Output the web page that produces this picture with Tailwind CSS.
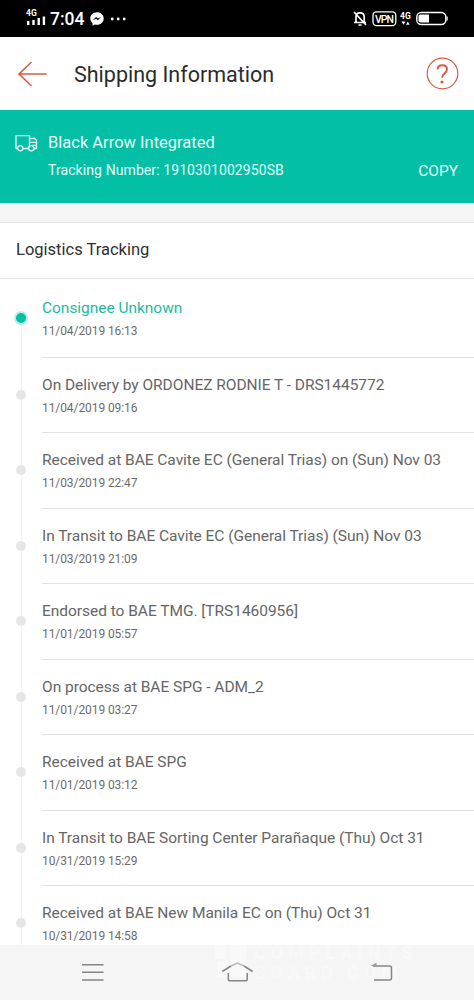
<!DOCTYPE html>
<html lang="en">
<head>
<meta charset="utf-8">
<title>Shipping Information</title>
<script src="https://cdn.jsdelivr.net/npm/@tailwindcss/browser@4"></script>
</head>
<body class="w-[474px] h-[1000px] overflow-hidden bg-white font-['Roboto',sans-serif] flex flex-col">
<div class="h-[37px] shrink-0 bg-black text-white flex items-center">
  <svg class="ml-6 w-[24px] h-[37px]" viewBox="0 0 24 37" fill="#fff"><text x="2" y="16" font-size="8.5" font-weight="700" font-family="Roboto">4G</text><path d="M3 21h2.400v4H3zM8.300 20h2.400v5H8.300zM13.500 18h2.400v7h-2.400zM18.700 16.500h2.400v8.500h-2.400z"/></svg>
  <span class="ml-[2px] mt-[2px] w-[37px] text-[17.500px] font-medium whitespace-nowrap">7:04</span>
  <svg class="ml-[3px] w-[14px] h-[14px]" viewBox="0 0 14 14"><path fill="#fff" d="M7 .3C3 .3.300 3.100.300 6.500c0 2 .9 3.700 2.300 4.800v2.400l2.200-1.200c.7.200 1.400.300 2.200.300 3.900 0 6.700-2.800 6.700-6.300S10.900.300 7 .300z"/><path d="M2.800 8.300 6 5l1.800 1.600L11 5 7.900 8.300 6.100 6.700z" fill="#000"/></svg>
  <svg class="ml-[6px] w-[18px] h-[4px]" viewBox="0 0 18 4" fill="#fff"><circle cx="2.200" cy="2" r="1.400"/><circle cx="8.200" cy="2" r="1.400"/><circle cx="14.200" cy="2" r="1.400"/></svg>
  <svg class="ml-auto w-[122px] h-[37px]" viewBox="352 0 122 37" fill="none" stroke="#fff"><path d="M354 22.500h12M356 22v-5c0-2.500 1.600-4.200 4-4.200s4.200 1.700 4.200 4.200v5M358.500 25h3M354 12l12 13" stroke-width="1.700"/><rect x="373" y="11.800" width="22.800" height="13.800" rx="3.500" stroke-width="1.300"/><text x="374.900" y="22.500" font-size="10.500" font-weight="500" font-family="Roboto" fill="#fff" stroke="none" textLength="19">VPN</text><text x="400" y="18.500" font-size="8.500" font-weight="700" font-family="Roboto" fill="#fff" stroke="none">4G</text><path d="M401.500 21.500h4l-2 3.200zM406 24.700h3.600l-1.800-3.200z" fill="#fff" stroke="none"/><rect x="416.800" y="12.500" width="29" height="12" rx="4.500" stroke-width="1.400"/><path d="M420.500 14.500h8.500v8h-8.500a2 2 0 0 1-2-2v-4a2 2 0 0 1 2-2zM446.500 16.500h1.200v4h-1.200z" fill="#fff" stroke="none"/></svg>
</div>
<header class="h-[73px] shrink-0 flex items-center">
  <svg class="ml-[17px] w-[31px] h-[28px]" viewBox="0 0 31 28" fill="none" stroke="#d95b43" stroke-width="1.600" stroke-linecap="round"><path d="M2 14h27M14 2.500 2 14l12 11.500"/></svg>
  <h1 class="ml-[26px] mt-[3px] text-[21.500px] text-[#2b2b2b] whitespace-nowrap">Shipping Information</h1>
  <svg class="ml-auto mr-[15px] w-[33px] h-[33px]" viewBox="0 0 33 33" fill="none" stroke="#d95b43"><circle cx="16.500" cy="16.500" r="15.300" stroke-width="1.200"/><path d="M11.600 12.500c0-2.600 2-4.200 4.700-4.200 2.800 0 4.700 1.600 4.700 4 0 3.700-4.900 4.200-4.900 8.500" stroke-width="1.900"/><circle cx="16" cy="25" r="1.600" fill="#d95b43" stroke="none"/></svg>
</header>
<section class="h-[93px] shrink-0 bg-[#02bfa5] text-[#e2fffa] flex items-start">
  <svg class="ml-[15px] mt-[24px] w-[23px] h-[18px]" viewBox="0 0 23 18" fill="none" stroke="#e2fffa" stroke-width="1.300" stroke-linejoin="round"><path d="M3 14.500H1V1.700h13.500v12.800M7.500 14.500h6.200M14.500 4.500h5l2 1.800v8.200h-2.500M15 8.300h6.500M17 11.300h4.500"/><circle cx="5.300" cy="14.200" r="2.600"/><circle cx="16.300" cy="14.200" r="2.600" fill="#02bfa5"/></svg>
  <div class="ml-[10px] mt-[22px] whitespace-nowrap">
    <div class="text-[16.500px] leading-[22px]">Black Arrow Integrated</div>
    <div class="mt-[5px] text-[14px] leading-[22px] tracking-[0.090px]">Tracking Number: 1910301002950SB</div>
  </div>
  <div class="ml-auto mr-[16px] mt-[50px] text-[15.500px] leading-[22px]">COPY</div>
</section>
<div class="h-[20px] shrink-0 bg-[#f5f5f5] border-b border-[#e6e6e6]"></div>
<h2 class="h-[56px] shrink-0 border-b border-[#e4e4e4] pl-4 pt-[16px] text-[16.500px] leading-[22px] text-[#2f2f2f]">Logistics Tracking</h2>
<main id="events" class="h-[666px] shrink-0 overflow-hidden"></main>
<nav class="relative h-[55px] shrink-0 bg-[#f5f5f5]">
  <div class="absolute left-[214px] top-0 flex gap-[8px] text-[#f8f8f8] font-bold">
    <svg class="w-[32px] h-[35px]" viewBox="0 0 32 35" fill="#f9f9f9"><path d="M0 0h12v14H0zM16 0h16v32H16zM4 16h10v16H4z"/></svg>
    <div class="text-[18px] tracking-[5px] whitespace-nowrap">
      <div class="h-[22px] leading-[16px]">COMPLAINTS</div>
      <div class="h-[22px] leading-[12px]">BOARD.COM</div>
    </div>
  </div>
  <svg class="relative w-[474px] h-[55px]" viewBox="0 945 474 55" fill="none" stroke="#858585" stroke-width="1.500"><path d="M82 964.700h21.500M82 972.300h21.500M82 980h21.500"/><path d="M222.300 971.500 231 966"/><path d="m231 966 6.500-3 6.500 3" stroke="#bbb"/><path d="m244 966 8.700 5.500M228.300 973v6.500q0 1.200 1.200 1.200h16.500q1.200 0 1.200-1.200V973"/><path d="M373 966h16.500q2 0 2 2v10q0 2-2 2H374"/><path d="M370.500 966l6-3.200v3.200z" fill="#999" stroke="none"/></svg>
</nav>
<script>
const events = [
  ["Consignee Unknown", "11/04/2019 16:13"],
  ["On Delivery by ORDONEZ RODNIE T - DRS1445772", "11/04/2019 09:16"],
  ["Received at BAE Cavite EC (General Trias) on (Sun) Nov 03", "11/03/2019 22:47"],
  ["In Transit to BAE Cavite EC (General Trias) (Sun) Nov 03", "11/03/2019 21:09"],
  ["Endorsed to BAE TMG. [TRS1460956]", "11/01/2019 05:57"],
  ["On process at BAE SPG - ADM_2", "11/01/2019 03:27"],
  ["Received at BAE SPG", "11/01/2019 03:12"],
  ["In Transit to BAE Sorting Center Parañaque (Thu) Oct 31", "10/31/2019 15:29"],
  ["Received at BAE New Manila EC on (Thu) Oct 31", "10/31/2019 14:58"]
];
document.getElementById("events").innerHTML = events.map(([title, time], i) => `
<div class="flex ${i ? "h-[75.500px]" : "h-[78.500px]"}">
  <div class="w-[42px] shrink-0 flex flex-col items-center">
    <div class="w-px h-[32px] ${i ? "bg-[#f3f3f3]" : ""}"></div>
    ${i ? '<div class="w-[10px] h-[10px] rounded-full bg-[#e6e6e6] shrink-0"></div>' : '<div class="w-[14px] h-[14px] rounded-full bg-[#02bfa5] border-2 border-[#b5f2e6] shrink-0"></div>'}
    <div class="w-px grow bg-[#f3f3f3]"></div>
  </div>
  <div class="grow border-b border-[#e2e2e2] whitespace-nowrap ${i ? "pt-[16px]" : "pt-[18px]"}">
    <div class="text-[15.500px] leading-[22px] tracking-[-0.035px] ${i ? "text-[#666]" : "text-[#1fba9e]"}">${title}</div>
    <div class="mt-[2px] text-[12px] leading-[20px] tracking-[-0.080px] text-[#6c6c6c]">${time}</div>
  </div>
</div>`).join("");
</script>
</body>
</html>
